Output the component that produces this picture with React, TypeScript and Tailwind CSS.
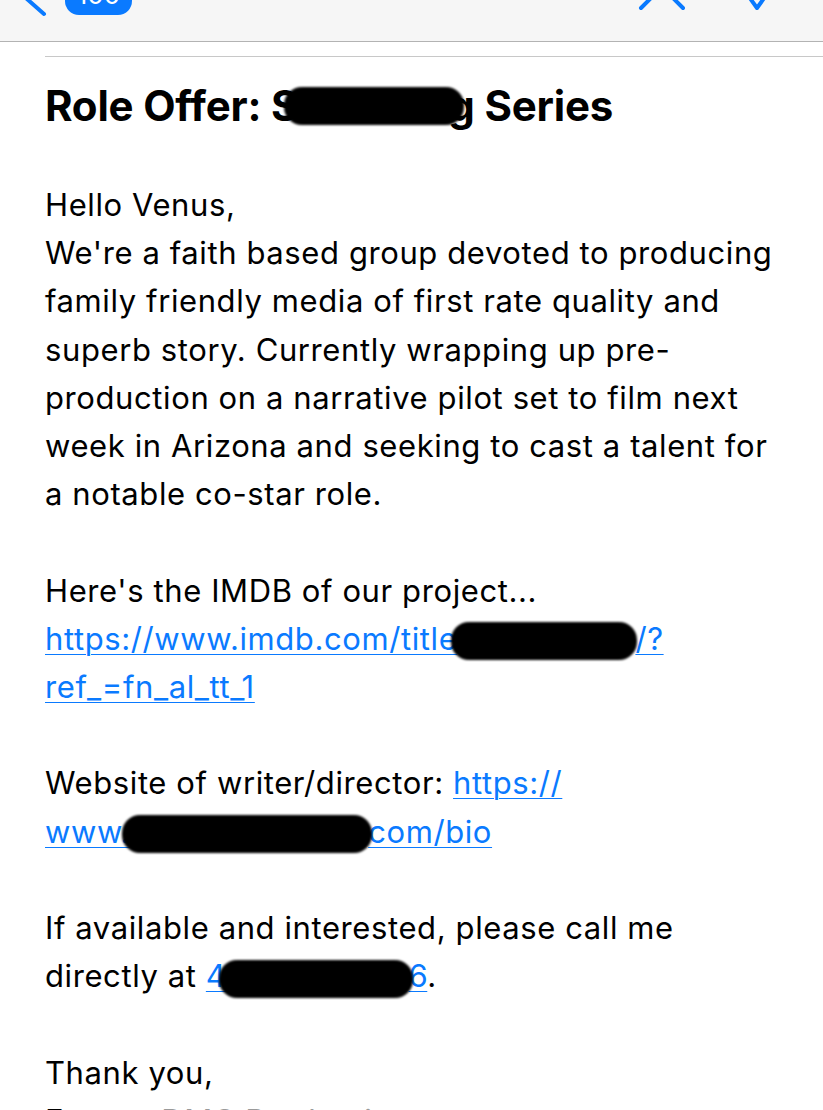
const FONT = { fontFamily: 'Inter, "Liberation Sans", sans-serif' }

function Blob({ w, className = '' }: { w: number; className?: string }) {
  return (
    <span
      className={`inline-block align-middle h-[38px] rounded-[18px] bg-black blur-[1px] ${className}`}
      style={{ width: w }}
    />
  )
}

function Link({ children }: { children: React.ReactNode }) {
  return <span className="text-[#0a7aff] underline decoration-1 underline-offset-[4px]">{children}</span>
}

const INTRO = [
  "We're a faith based group devoted to producing",
  'family friendly media of first rate quality and',
  'superb story. Currently wrapping up pre-',
  'production on a narrative pilot set to film next',
  'week in Arizona and seeking to cast a talent for',
  'a notable co-star role.',
]

export default function App() {
  return (
    <div className="w-[823px] h-[1110px] overflow-hidden bg-white text-black" style={FONT}>
      {/* nav bar, mostly scrolled off */}
      <div className="relative h-[42px] bg-[#f6f6f6] border-b border-[#b3b3b3]">
        <svg className="absolute left-[22px] top-[-20px]" width="26" height="38" viewBox="0 0 26 38">
          <path d="M22 2 L5 19 L22 34" fill="none" stroke="#0a7aff" strokeWidth="4" strokeLinecap="round" strokeLinejoin="round" />
        </svg>
        <div className="absolute left-[65px] top-[-20px] w-[67px] h-[35px] rounded-[14px] bg-[#0a7aff] text-white text-[26px] leading-[30px] text-center">
          100
        </div>
        <svg className="absolute left-[638px] top-[-16px]" width="48" height="28" viewBox="0 0 48 28">
          <path d="M3 24 L24 3 L45 24" fill="none" stroke="#0a7aff" strokeWidth="4" strokeLinecap="round" strokeLinejoin="round" />
        </svg>
        <svg className="absolute left-[744px] top-[-14px]" width="26" height="26" viewBox="0 0 26 26">
          <path d="M3 8 L13 22 L23 8" fill="none" stroke="#0a7aff" strokeWidth="4" strokeLinecap="round" strokeLinejoin="round" />
        </svg>
      </div>

      <div className="pl-[45px] pt-[14px]">
        <div className="border-t border-[#c8c8c8]" />
        <h1 className="mt-[22px] text-[42px] leading-[54px] font-bold tracking-[-0.2px] whitespace-nowrap">
          Role Offer: S<Blob w={180} className="-ml-[14px] -mr-[16px] -mt-[8px]" />g Series
        </h1>

        <div className="mt-[48px] text-[31px] leading-[48.2px] tracking-[0.6px] whitespace-nowrap">
          <p>Hello Venus,</p>
          {INTRO.map(l => (
            <p key={l}>{l}</p>
          ))}
          <p>&nbsp;</p>
          <p>Here's the IMDB of our project...</p>
          <p>
            <Link>
              https://www.imdb.com/title<Blob w={186} className="-ml-[6px] -mr-[2px]" />/?
            </Link>
          </p>
          <p>
            <Link>ref_=fn_al_tt_1</Link>
          </p>
          <p>&nbsp;</p>
          <p>
            Website of writer/director: <Link>https://</Link>
          </p>
          <p>
            <Link>
              www.<Blob w={250} className="-ml-[8px] -mr-[4px]" />com/bio
            </Link>
          </p>
          <p>&nbsp;</p>
          <p>If available and interested, please call me</p>
          <p>
            directly at{' '}
            <Link>
              4<Blob w={194} className="-ml-[8px] -mr-[4px]" />6
            </Link>
            .
          </p>
          <p>&nbsp;</p>
          <p>Thank you,</p>
          <p>
            E<span className="text-transparent">xxxxx</span> <span className="text-[#9a9a9a]">DMC Productions</span>
          </p>
        </div>
      </div>
    </div>
  )
}
